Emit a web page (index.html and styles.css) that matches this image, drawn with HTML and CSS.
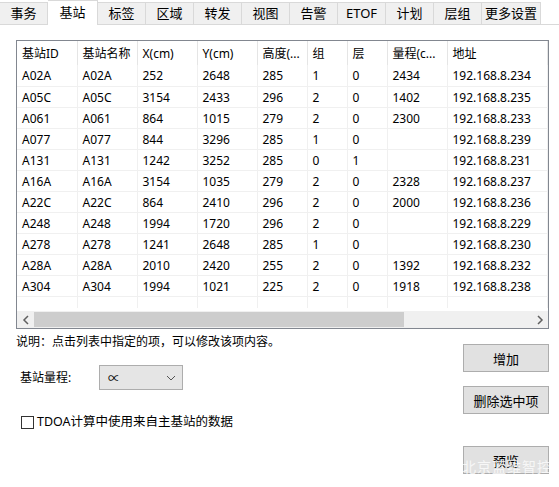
FILE: index.html
```html
<!DOCTYPE html>
<html>
<head>
<meta charset="utf-8">
<link rel="stylesheet" href="styles.css">
</head>
<body>
<div class="window">
  <div class="tabs">
    <div class="tab">事务</div>
    <div class="tab active">基站</div>
    <div class="tab">标签</div>
    <div class="tab">区域</div>
    <div class="tab">转发</div>
    <div class="tab">视图</div>
    <div class="tab">告警</div>
    <div class="tab">ETOF</div>
    <div class="tab">计划</div>
    <div class="tab">层组</div>
    <div class="tab last">更多设置</div>
  </div>
  <div class="content">
    <div class="list">
      <table class="grid">
        <colgroup>
          <col class="c60"><col class="c60"><col class="c60"><col class="c60"><col class="c50"><col class="c40"><col class="c40"><col class="c60"><col class="c100"><col>
        </colgroup>
        <thead>
          <tr><th>基站ID</th><th>基站名称</th><th>X(cm)</th><th>Y(cm)</th><th>高度(...</th><th>组</th><th>层</th><th>量程(c...</th><th>地址</th><th></th></tr>
        </thead>
        <tbody>
          <tr><td>A02A</td><td>A02A</td><td>252</td><td>2648</td><td>285</td><td>1</td><td>0</td><td>2434</td><td>192.168.8.234</td><td></td></tr>
          <tr><td>A05C</td><td>A05C</td><td>3154</td><td>2433</td><td>296</td><td>2</td><td>0</td><td>1402</td><td>192.168.8.235</td><td></td></tr>
          <tr><td>A061</td><td>A061</td><td>864</td><td>1015</td><td>279</td><td>2</td><td>0</td><td>2300</td><td>192.168.8.233</td><td></td></tr>
          <tr><td>A077</td><td>A077</td><td>844</td><td>3296</td><td>285</td><td>1</td><td>0</td><td></td><td>192.168.8.239</td><td></td></tr>
          <tr><td>A131</td><td>A131</td><td>1242</td><td>3252</td><td>285</td><td>0</td><td>1</td><td></td><td>192.168.8.231</td><td></td></tr>
          <tr><td>A16A</td><td>A16A</td><td>3154</td><td>1035</td><td>279</td><td>2</td><td>0</td><td>2328</td><td>192.168.8.237</td><td></td></tr>
          <tr><td>A22C</td><td>A22C</td><td>864</td><td>2410</td><td>296</td><td>2</td><td>0</td><td>2000</td><td>192.168.8.236</td><td></td></tr>
          <tr><td>A248</td><td>A248</td><td>1994</td><td>1720</td><td>296</td><td>2</td><td>0</td><td></td><td>192.168.8.229</td><td></td></tr>
          <tr><td>A278</td><td>A278</td><td>1241</td><td>2648</td><td>285</td><td>1</td><td>0</td><td></td><td>192.168.8.230</td><td></td></tr>
          <tr><td>A28A</td><td>A28A</td><td>2010</td><td>2420</td><td>255</td><td>2</td><td>0</td><td>1392</td><td>192.168.8.232</td><td></td></tr>
          <tr><td>A304</td><td>A304</td><td>1994</td><td>1021</td><td>225</td><td>2</td><td>0</td><td>1918</td><td>192.168.8.238</td><td></td></tr>
          <tr class="blank"><td></td><td></td><td></td><td></td><td></td><td></td><td></td><td></td><td></td><td></td></tr>
        </tbody>
      </table>
      <div class="hscroll">
        <span class="arrow">
          <svg width="8" height="10" viewBox="0 0 8 10"><path d="M6 1 L2 5 L6 9" fill="none" stroke="#606060" stroke-width="1.5"/></svg>
        </span>
        <div class="track"><div class="thumb"></div></div>
        <span class="arrow">
          <svg width="8" height="10" viewBox="0 0 8 10"><path d="M2 1 L6 5 L2 9" fill="none" stroke="#606060" stroke-width="1.5"/></svg>
        </span>
      </div>
    </div>
    <div class="lower">
      <div class="left">
        <div class="note">说明：点击列表中指定的项，可以修改该项内容。</div>
        <div class="range">
          <span class="label">基站量程:</span>
          <div class="select">
            <span>∝</span>
            <svg width="10" height="6" viewBox="0 0 10 6"><path d="M1 1 L5 5 L9 1" fill="none" stroke="#555" stroke-width="1"/></svg>
          </div>
        </div>
        <label class="check"><span class="box"></span>TDOA计算中使用来自主基站的数据</label>
      </div>
      <div class="right">
        <button class="btn">增加</button>
        <button class="btn">删除选中项</button>
        <button class="btn preview">预览</button>
      </div>
    </div>
  </div>
  <div class="watermark">北京蓝维智控</div>
</div>
</body>
</html>
```
FILE: styles.css
```css
* { box-sizing: border-box; }
html, body { margin: 0; padding: 0; background: #fff; }
body {
  font-family: "Noto Sans", "Noto Sans CJK SC", sans-serif;
  font-size: 12px;
  color: #000;
}
.window {
  position: relative;
  width: 559px;
  height: 487px;
  overflow: hidden;
  background: #fff;
}
.tabs {
  display: flex;
  align-items: flex-end;
  height: 25px;
  background: #fff;
}
.tab {
  height: 23px;
  line-height: 21px;
  font-size: 13px;
  text-align: center;
  background: #f0f0f0;
  border: 1px solid #d9d9d9;
  border-left: none;
  border-bottom: 1px solid #d9d9d9;
  width: 48px;
}
.tab:first-child { width: 48px; border-left: none; }
.tab.active {
  width: 50px;
  height: 25px;
  line-height: 22px;
  background: #fff;
  border-bottom: none;
}
.tab.last { width: 59px; }
.tabs::after {
  content: "";
  flex: 1;
  height: 1px;
  background: #d9d9d9;
}
.content {
  padding: 15px 10px 0 16px;
}
.list {
  width: 533px;
  height: 289px;
  border: 1px solid #828790;
  overflow: hidden;
  display: flex;
  flex-direction: column;
}
.grid {
  border-collapse: collapse;
  table-layout: fixed;
  width: 531px;
}
.c60 { width: 60px; }
.c50 { width: 50px; }
.c40 { width: 40px; }
.c100 { width: 100px; }
.grid th, .grid td {
  padding: 0 0 0 5px;
  text-align: left;
  font-weight: normal;
  white-space: nowrap;
  overflow: hidden;
  border-left: 1px solid #f0f0f0;
  border-right: 1px solid #f0f0f0;
}
.grid th {
  height: 24px;
  line-height: 22px;
  padding-top: 2px;
  border-left: 1px solid #e5e5e5;
  border-right: 1px solid #e5e5e5;
  border-bottom: none;
}
.grid td {
  height: 21px;
  line-height: 19px;
  padding-top: 1px;
  border-bottom: 1px solid #f0f0f0;
}
.grid tr > :first-child { border-left: none; }
.grid tr.blank td { height: 12px; border-bottom: none; }
.hscroll {
  margin-top: auto;
  flex-shrink: 0;
  height: 17px;
  display: flex;
  align-items: center;
  background: #f0f0f0;
}
.arrow {
  width: 17px;
  height: 17px;
  display: flex;
  align-items: center;
  justify-content: center;
}
.track {
  flex: 1;
  height: 17px;
  display: flex;
  align-items: center;
}
.thumb {
  width: 370px;
  height: 15px;
  background: #cdcdcd;
}
.lower {
  display: flex;
  justify-content: space-between;
}
.left {
  display: flex;
  flex-direction: column;
}
.note {
  margin-top: 5px;
  line-height: 16px;
}
.range {
  display: flex;
  align-items: center;
  margin-top: 15px;
  padding-left: 4px;
}
.label {
  width: 79px;
  line-height: 16px;
}
.select {
  width: 84px;
  height: 25px;
  border: 1px solid #adadad;
  background: #e5e5e5;
  display: flex;
  align-items: center;
  justify-content: space-between;
  padding: 0 6px 0 8px;
  font-size: 12px;
}
.check {
  display: flex;
  align-items: center;
  margin-top: 24px;
  padding-left: 5px;
  font-size: 12.5px;
  line-height: 16px;
}
.box {
  width: 13px;
  height: 13px;
  border: 1px solid #333;
  background: #fff;
  margin-right: 3px;
}
.right {
  display: flex;
  flex-direction: column;
  padding-top: 15px;
}
.btn {
  width: 86px;
  height: 28px;
  background: #e1e1e1;
  border: 1px solid #adadad;
  font-family: "Noto Sans CJK SC", sans-serif;
  font-size: 13px;
  padding: 0;
  margin-bottom: 14px;
  color: #000;
}
.btn.preview { margin-top: 18px; }
.watermark {
  position: absolute;
  left: 462px;
  top: 456px;
  font-family: "Noto Sans CJK SC", sans-serif;
  font-size: 14px;
  color: rgba(255,255,255,0.75);
  letter-spacing: 1px;
  white-space: nowrap;
}
```
